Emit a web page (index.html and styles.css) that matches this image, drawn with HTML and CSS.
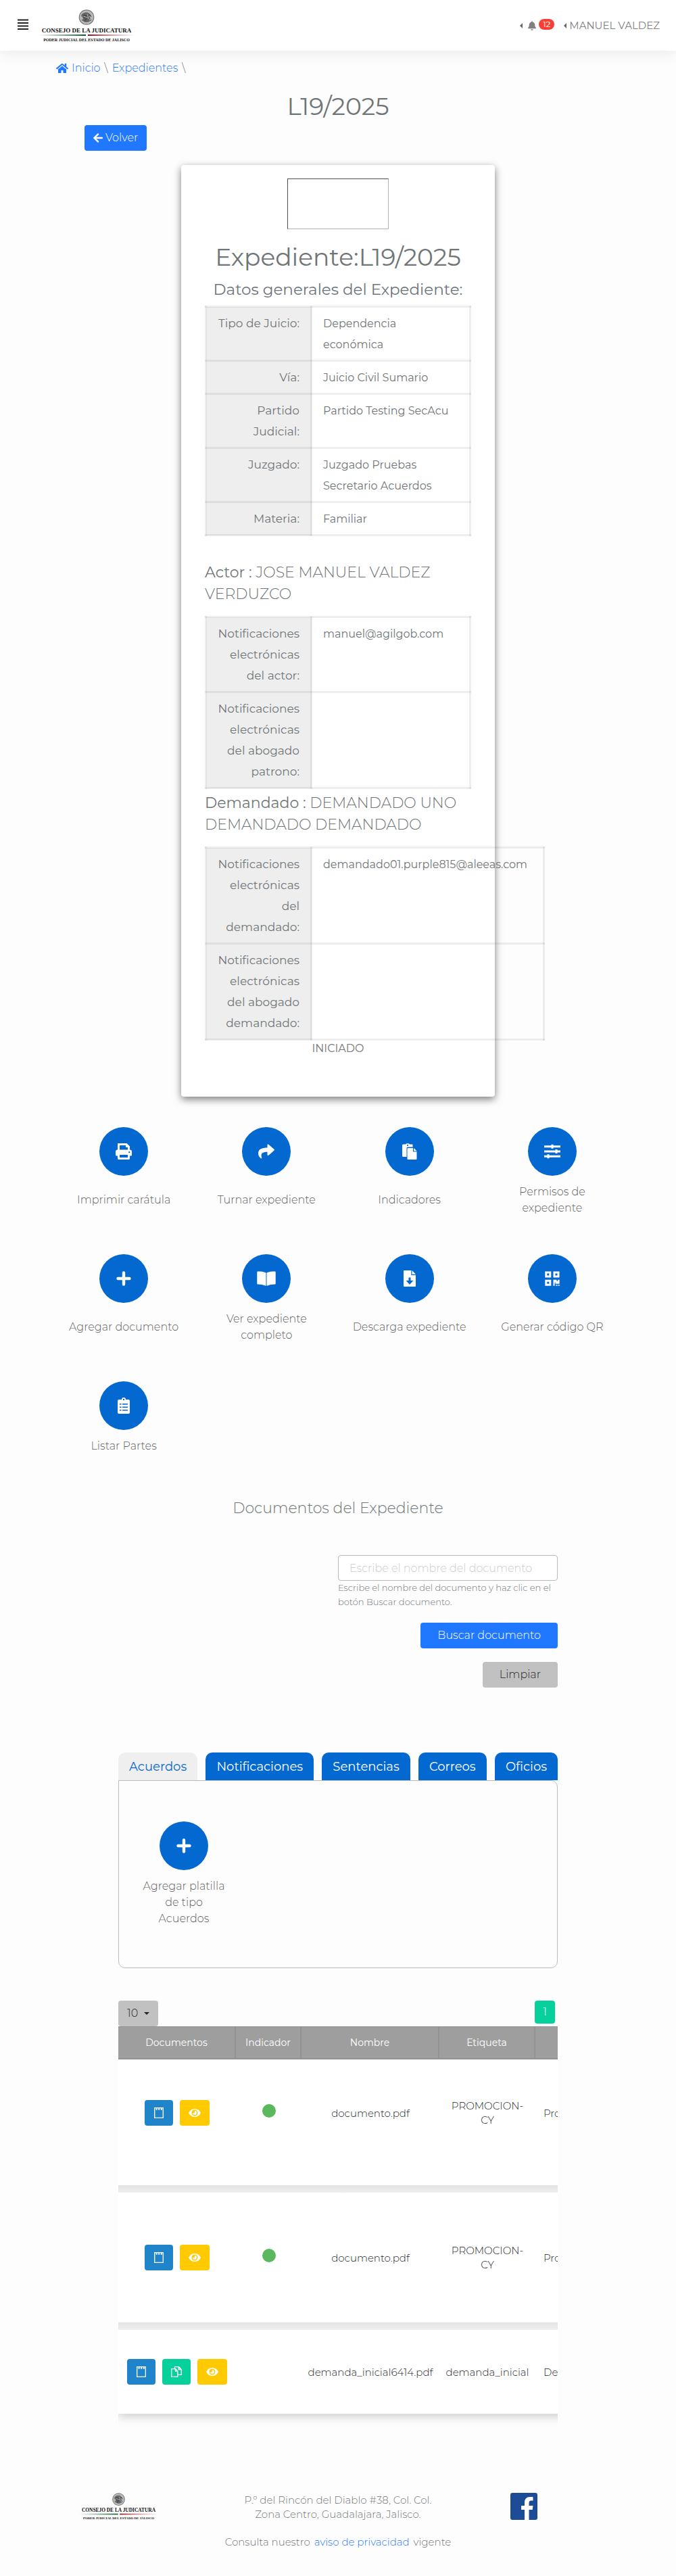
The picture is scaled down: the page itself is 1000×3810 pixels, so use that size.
FILE: index.html
```html
<!DOCTYPE html>
<html lang="es">
<head>
<meta charset="utf-8">
<meta name="viewport" content="width=device-width, initial-scale=1">
<title>L19/2025</title>
<link rel="stylesheet" href="styles.css">
</head>
<body>
<svg class="defs" aria-hidden="true">
  <defs>
    <linearGradient id="green" x1="0" x2="1"><stop offset="0" stop-color="#1d6b35" stop-opacity="0"/><stop offset="1" stop-color="#0f5a28"/></linearGradient>
    <linearGradient id="red" x1="0" x2="1"><stop offset="0" stop-color="#8f0d18"/><stop offset="1" stop-color="#c8555c" stop-opacity="0"/></linearGradient>
    <symbol id="logo" viewBox="0 0 142 48">
      <circle cx="71" cy="11.500" r="10.700" fill="#d6d6d6" stroke="#777" stroke-width="1.300"/>
      <circle cx="71" cy="11.500" r="8.800" fill="#bdbdbd" stroke="#999" stroke-width=".6"/>
      <path d="M64 7c3-3 8-4 11-1l3 3-3 1 2 3-3 4-5 1-4-3 2-3-4-2z" fill="#666"/>
      <path d="M66 8l7 2M65 12l8 1M68 16l6-4M75 7l3 4M64 15c4 4 10 4 14 0" stroke="#333" stroke-width="1" fill="none"/>
      <path d="M67 10l6 3M72 7l2 7" stroke="#ddd" stroke-width=".7" fill="none"/>
      <text x="71" y="33.500" class="logo-name">CONSEJO DE LA JUDICATURA</text>
      <rect x="0" y="37" width="70" height="2" fill="url(#green)"/>
      <rect x="73" y="37" width="69" height="2" fill="url(#red)"/>
      <text x="71" y="47" class="logo-sub">PODER JUDICIAL DEL ESTADO DE JALISCO</text>
    </symbol>
    <symbol id="plus" viewBox="0 0 24 24"><path d="M12 3.500v17M3.500 12h17" stroke="#fff" stroke-width="4.400" stroke-linecap="round"/></symbol>
    <symbol id="note" viewBox="0 0 16 18"><path d="M1.700 1.600h12.600v14.800H1.700z" fill="none" stroke="#fff" stroke-width="1.300"/><path d="M3 3.500h10.500" stroke="#fff" stroke-width="2.600" stroke-dasharray="2 1.600" stroke-dashoffset="-.6"/></symbol>
    <symbol id="eye" viewBox="0 0 20 14"><path fill="#fff" fill-rule="evenodd" d="M1 7C3 3 6 1 10 1s7 2 9 6c-2 4-5 6-9 6S3 11 1 7zm9-4.500a4.500 4.500 0 1 0 0 9 4.500 4.500 0 0 0 0-9z"/><path fill="#fff" d="M10 4a3 3 0 1 1-3 3c1.200 1 3 0 3-1.300C10 5 9.600 4.500 10 4z"/></symbol>
    <symbol id="copies" viewBox="0 0 18 18"><path d="M1.700 4.700h6l3 3v8.600h-9zM7.500 5v3h3M6.500 4.500V1.700h6l3.800 3.800v7.800h-5M12.300 2v3.500h3.700" fill="none" stroke="#fff" stroke-width="1.300"/></symbol>
  </defs>
</svg>

<header class="topbar">
  <button class="menu" type="button" aria-label="Menú">
    <svg viewBox="0 0 16 16" width="16" height="16"><path d="M0 1.500h16M0 6h16M0 10.500h16M0 15h16" stroke="#222" stroke-width="2"/></svg>
  </button>
  <svg class="logo" role="img" aria-label="Consejo de la Judicatura"><use href="#logo"/></svg>
  <button class="bell" type="button" aria-label="Notificaciones">
    <span class="caret-left"></span>
    <svg viewBox="0 0 448 512" width="12" height="14"><path fill="#808080" d="M224 512c35.320 0 63.970-28.650 63.970-64H160.030c0 35.350 28.650 64 63.970 64zm215.390-149.710c-19.320-20.760-55.470-51.990-55.470-154.290 0-77.700-54.480-139.900-127.940-155.160V32c0-17.670-14.320-32-31.980-32s-31.980 14.330-31.980 32v20.840C118.560 68.100 64.080 130.300 64.080 208c0 102.300-36.150 133.530-55.470 154.290-6 6.450-8.660 14.160-8.610 21.710.11 16.400 12.980 32 32.100 32h383.800c19.120 0 32-15.600 32.100-32 .05-7.550-2.610-15.270-8.610-21.710z"/></svg>
    <span class="badge">12</span>
  </button>
  <button class="user" type="button"><span class="caret-left"></span>MANUEL VALDEZ</button>
</header>

<main>
  <nav class="crumbs" aria-label="Ruta">
    <a href="#"><svg viewBox="0 0 576 512" width="18" height="16"><path fill="currentColor" d="M280.370 148.260L96 300.110V464a16 16 0 0 0 16 16l112.060-.29a16 16 0 0 0 15.920-16V368a16 16 0 0 1 16-16h64a16 16 0 0 1 16 16v95.640a16 16 0 0 0 16 16.050L464 480a16 16 0 0 0 16-16V300L295.670 148.260a12.190 12.190 0 0 0-15.300 0zM571.600 251.470L488 182.560V44.050a12 12 0 0 0-12-12h-56a12 12 0 0 0-12 12v72.610L318.470 43a48 48 0 0 0-61 0L4.340 251.470a12 12 0 0 0-1.600 16.900l25.500 31A12 12 0 0 0 45.150 301l235.220-193.740a12.190 12.190 0 0 1 15.300 0L530.900 301a12 12 0 0 0 16.900-1.600l25.500-31a12 12 0 0 0-1.700-16.930z"/></svg>Inicio</a>
    <span>\</span><a href="#">Expedientes</a><span>\</span>
  </nav>
  <h1 class="title">L19/2025</h1>
  <div class="back">
    <a class="btn primary compact" href="#"><svg viewBox="0 0 448 512" width="14" height="16"><path fill="#fff" d="M257.500 445.100l-22.200 22.200c-9.400 9.400-24.600 9.400-33.900 0L7 273c-9.400-9.400-9.400-24.600 0-33.900L201.400 44.700c9.400-9.400 24.600-9.400 33.900 0l22.200 22.200c9.500 9.500 9.300 25-.4 34.300L136.600 216H424c13.300 0 24 10.700 24 24v32c0 13.300-10.700 24-24 24H136.600l120.500 114.800c9.800 9.300 10 24.800.4 34.300z"/></svg>Volver</a>
  </div>

  <section class="card">
    <div class="qr"></div>
    <h2 class="card-title">Expediente:L19/2025</h2>
    <h3 class="card-sub">Datos generales del Expediente:</h3>
    <table class="facts">
      <tr><th scope="row">Tipo de Juicio:</th><td>Dependencia económica</td></tr>
      <tr><th scope="row">Vía:</th><td>Juicio Civil Sumario</td></tr>
      <tr><th scope="row">Partido Judicial:</th><td>Partido Testing SecAcu</td></tr>
      <tr><th scope="row">Juzgado:</th><td>Juzgado Pruebas Secretario Acuerdos</td></tr>
      <tr><th scope="row">Materia:</th><td>Familiar</td></tr>
    </table>
    <h3 class="party actor"><b>Actor :</b> JOSE MANUEL VALDEZ VERDUZCO</h3>
    <table class="facts">
      <tr><th scope="row">Notificaciones electrónicas del actor:</th><td>manuel@agilgob.com</td></tr>
      <tr><th scope="row">Notificaciones electrónicas del abogado patrono:</th><td></td></tr>
    </table>
    <h3 class="party"><b>Demandado :</b> DEMANDADO UNO DEMANDADO DEMANDADO</h3>
    <table class="facts wide">
      <tr><th scope="row">Notificaciones electrónicas del<br>demandado:</th><td>demandado01.purple815@aleeas.com</td></tr>
      <tr><th scope="row">Notificaciones electrónicas del abogado demandado:</th><td></td></tr>
    </table>
    <p class="status">INICIADO</p>
  </section>

  <section class="actions">
    <button type="button" class="action"><span class="disc"><svg viewBox="0 0 24 24"><path d="M4.500 12V1.500H16l3.500 3.500v7" fill="none" stroke="#fff" stroke-width="3"/><path d="M15 1v5h5" fill="#fff"/><path fill="#fff" fill-rule="evenodd" d="M3 9.500h18a3 3 0 0 1 3 3v5a1 1 0 0 1-1 1H1a1 1 0 0 1-1-1v-5a3 3 0 0 1 3-3zm17.200 2.600a1.200 1.200 0 1 0 0 2.400 1.200 1.200 0 0 0 0-2.400z"/><path d="M4.500 15.500h15v7h-15z" fill="#0468d1" stroke="#fff" stroke-width="3" stroke-linejoin="round"/></svg></span><span class="action-label">Imprimir carátula</span></button>
    <button type="button" class="action"><span class="disc"><svg viewBox="0 0 512 512"><path fill="#fff" d="M503.691 189.836L327.687 37.851C312.281 24.546 288 35.347 288 56.015v80.053C127.371 137.907 0 170.100 0 322.326c0 61.441 39.581 122.309 83.333 154.132 13.653 9.931 33.111-2.533 28.077-18.631C66.066 312.814 132.917 274.316 288 272.085V360c0 20.700 24.300 31.453 39.687 18.164l176.004-152c11.071-9.562 11.086-26.753 0-36.328z"/></svg></span><span class="action-label">Turnar expediente</span></button>
    <button type="button" class="action"><span class="disc"><svg viewBox="0 0 24 24"><path fill="#fff" fill-rule="evenodd" d="M2.500 1.500H6C6.500-.2 11.500-.2 12 1.500h3.500a1 1 0 0 1 1 1V5.500H9.500a2 2 0 0 0-2 2V20h-5a1.500 1.500 0 0 1-1.500-1.500V3a1.500 1.500 0 0 1 1.500-1.500zM9 1.800a1.100 1.100 0 1 0 0 2.200 1.100 1.100 0 0 0 0-2.200z"/><path fill="#fff" d="M9.500 7H17v5.500h5.500V23a1 1 0 0 1-1 1h-12a1 1 0 0 1-1-1V8a1 1 0 0 1 1-1z"/><path fill="#fff" d="M18.200 7l4.500 4.500h-4.500z"/></svg></span><span class="action-label">Indicadores</span></button>
    <button type="button" class="action"><span class="disc"><svg viewBox="0 0 24 24"><path d="M0 4.700h24M0 12h24M0 19.300h24" stroke="#fff" stroke-width="3"/><path d="M12 1.700v6M18 9v6M6 16.300v6" stroke="#fff" stroke-width="3"/></svg></span><span class="action-label">Permisos de expediente</span></button>
    <button type="button" class="action"><span class="disc"><svg><use href="#plus"/></svg></span><span class="action-label">Agregar documento</span></button>
    <button type="button" class="action"><span class="disc"><svg class="broad" viewBox="0 0 28 24"><path fill="#fff" d="M13.500 3.500C10 1.700 5.500 1.500 1.200 1.500A.9.9 0 0 0 .3 2.400V19.500c0 .6.400 1 1 1 4 .1 8 .5 11.500 2.200.4.200.7 0 .7-.4zM14.500 3.500c3.500-1.800 8-2 12.300-2 .5 0 .9.400.9.900V19.500c0 .6-.4 1-1 1-4 .1-8 .5-11.500 2.200-.4.200-.7 0-.7-.4z"/></svg></span><span class="action-label">Ver expediente completo</span></button>
    <button type="button" class="action"><span class="disc"><svg viewBox="0 0 24 24"><path fill="#fff" fill-rule="evenodd" d="M4 0h10.300v7H21v16a1 1 0 0 1-1 1H4a1 1 0 0 1-1-1V1a1 1 0 0 1 1-1zm6.500 10.500V15H6.700l5.300 6 5.300-6h-3.800v-4.500z"/><path fill="#fff" d="M15.500 0L21 5.700h-5.500z"/></svg></span><span class="action-label">Descarga expediente</span></button>
    <button type="button" class="action"><span class="disc"><svg viewBox="0 0 24 24"><path d="M2.800 3h6v6h-6zM15 3h6v6h-6zM2.800 15.200h6v6h-6z" fill="none" stroke="#fff" stroke-width="3"/><path fill="#fff" d="M13.500 13.700h5v2h1.700v-2h2.400v6h-6v-2h-1v5h-2.100zM17.500 21h2v1.700h-2zM20.700 21h2v1.700h-2z"/></svg></span><span class="action-label">Generar código QR</span></button>
    <button type="button" class="action"><span class="disc"><svg viewBox="0 0 24 24"><path fill="#fff" fill-rule="evenodd" d="M5 3h4a3 3 0 0 1 6 0h4a2 2 0 0 1 2 2v17a2 2 0 0 1-2 2H5a2 2 0 0 1-2-2V5a2 2 0 0 1 2-2zm7-1.200a1.200 1.200 0 1 0 0 2.400 1.200 1.200 0 0 0 0-2.400z"/><path d="M6 9.800h2.500M10 9.800h8M6 14.300h2.500M10 14.300h8M6 18.800h2.500M10 18.800h8" stroke="#0468d1" stroke-width="1.500"/></svg></span><span class="action-label">Listar Partes</span></button>
  </section>

  <section class="docs">
    <h2 class="docs-title">Documentos del Expediente</h2>
    <form class="search">
      <input id="doc-name" type="text" placeholder="Escribe el nombre del documento">
      <label for="doc-name">Escribe el nombre del documento y haz clic en el botón Buscar documento.</label>
      <button type="button" class="btn primary">Buscar documento</button>
      <button type="button" class="btn muted">Limpiar</button>
    </form>

    <div class="tabs">
      <button type="button" class="tab active">Acuerdos</button>
      <button type="button" class="tab">Notificaciones</button>
      <button type="button" class="tab">Sentencias</button>
      <button type="button" class="tab">Correos</button>
      <button type="button" class="tab">Oficios</button>
    </div>
    <div class="panel">
      <button type="button" class="action"><span class="disc"><svg><use href="#plus"/></svg></span><span class="action-label">Agregar platilla de tipo Acuerdos</span></button>
    </div>

    <div class="tools">
      <button type="button" class="btn muted size">10<span class="caret-down"></span></button>
      <button type="button" class="page">1</button>
    </div>
    <div class="scroller">
      <table class="list">
        <colgroup><col class="c1"><col class="c2"><col class="c3"><col class="c4"><col class="c5"></colgroup>
        <thead><tr><th>Documentos</th><th>Indicador</th><th>Nombre</th><th>Etiqueta</th><th></th></tr></thead>
        <tbody>
          <tr class="first">
            <td><div class="tools-cell"><button type="button" class="ico blue" aria-label="Nota"><svg width="16" height="18"><use href="#note"/></svg></button><button type="button" class="ico yellow" aria-label="Ver"><svg width="20" height="14"><use href="#eye"/></svg></button></div></td>
            <td><span class="dot"></span></td><td>documento.pdf</td><td>PROMOCION-CY</td><td>Promoción</td>
          </tr>
          <tr class="tall">
            <td><div class="tools-cell"><button type="button" class="ico blue" aria-label="Nota"><svg width="16" height="18"><use href="#note"/></svg></button><button type="button" class="ico yellow" aria-label="Ver"><svg width="20" height="14"><use href="#eye"/></svg></button></div></td>
            <td><span class="dot"></span></td><td>documento.pdf</td><td>PROMOCION-CY</td><td>Promoción</td>
          </tr>
          <tr class="short">
            <td><div class="tools-cell"><button type="button" class="ico blue" aria-label="Nota"><svg width="16" height="18"><use href="#note"/></svg></button><button type="button" class="ico teal" aria-label="Copias"><svg width="18" height="18"><use href="#copies"/></svg></button><button type="button" class="ico yellow" aria-label="Ver"><svg width="20" height="14"><use href="#eye"/></svg></button></div></td>
            <td></td><td>demanda_inicial6414.pdf</td><td>demanda_inicial</td><td>Demanda</td>
          </tr>
        </tbody>
      </table>
    </div>
  </section>
</main>

<footer class="footer">
  <svg class="foot-logo" role="img" aria-label="Consejo de la Judicatura"><use href="#logo"/></svg>
  <div class="foot-text">
    <p>P.º del Rincón del Diablo #38, Col. Col.<br>Zona Centro, Guadalajara, Jalisco.</p>
    <p>Consulta nuestro <a href="#">aviso de privacidad</a> vigente</p>
  </div>
  <a class="facebook" href="#" aria-label="Facebook"><svg viewBox="0 0 40 40" width="40" height="40"><rect width="40" height="40" rx="3" fill="#1c4c96"/><path fill="#fff" d="M21 40V25h-5v-6h5v-4.500C21 9 24 6 29 6c2 0 3.500.1 4.500.3v5.200H31c-2.800 0-3.500 1.300-3.500 3.500v4h6l-.8 6h-5.200v15z"/></svg></a>
</footer>
</body>
</html>
```
FILE: styles.css
```css
* { box-sizing: border-box; }
body {
  margin: 0;
  background: #fdfdfd;
  color: #707678;
  font: 300 16px/24px Montserrat, Inter, sans-serif;
}
h1, h2, h3, p { margin: 0; font-weight: 300; }
button, input { font: inherit; color: inherit; }
button { border: 0; padding: 0; background: none; cursor: pointer; }
a { color: #1f78ff; text-decoration: none; }
svg { display: block; flex: none; }
.defs { position: absolute; width: 0; height: 0; }

.topbar {
  display: flex;
  align-items: center;
  height: 75px;
  padding: 0 24px 0 26px;
  background: #fff;
  box-shadow: 0 4px 20px rgba(0, 0, 0, .08);
  color: #808080;
}
.menu { margin: 0 15px 4px 0; }
.logo { width: 142px; height: 48px; margin-right: auto; }
.logo-name { font: 700 9px "Liberation Serif", serif; text-anchor: middle; fill: #111; }
.logo-sub { font: 700 6px "Liberation Serif", serif; text-anchor: middle; fill: #111; }
.bell, .user { display: flex; align-items: center; }
.bell { gap: 8px; margin-right: 14px; }
.user { gap: 4px; font-size: 15px; font-weight: 400; }
.caret-left { border: 4px solid transparent; border-right-color: #666; border-left: 0; }
.badge {
  margin: 0 0 4px -4px;
  padding: 0 6px;
  border-radius: 8px;
  background: #f93f35;
  color: #fff;
  font-size: 12px;
  font-weight: 400;
  line-height: 16px;
}

.crumbs { display: flex; gap: 6px; padding: 14px 83px 0; }
.crumbs a { display: flex; align-items: center; gap: 5px; }
.title { margin-top: 22px; font-size: 36px; line-height: 44px; font-weight: 400; text-align: center; }
.back { display: flex; margin: 6px 125px 21px; }
.btn {
  display: flex;
  align-items: center;
  height: 38px;
  padding: 0 25px;
  border-radius: 4px;
}
.compact { gap: 4px; padding: 0 13px; }
.primary { background: #1f78ff; color: #fff; }
.muted { background: #c1c1c1; color: #212529; }

.card {
  width: 46.4%;
  min-width: 464px;
  margin: 0 auto;
  padding: 20px 35px 59px;
  border-radius: 4px;
  background: #fff;
  box-shadow: 0 4px 12px rgba(0, 0, 0, .5);
}
.qr { width: 150px; height: 75px; margin: 0 auto; border: 1px solid; border-color: #4c4c4c #b2b2b2 #b2b2b2 #4c4c4c; }
.card-title { margin-top: 17px; font-size: 36px; line-height: 48px; font-weight: 400; text-align: center; white-space: nowrap; }
.card-sub { margin: 8px 0; color: #6c757d; font-size: 23px; line-height: 32px; font-weight: 400; text-align: center; white-space: nowrap; }
.facts { width: 100%; table-layout: fixed; border-collapse: collapse; font-size: 16px; line-height: 31px; }
.facts th, .facts td { padding: 8px 16px 7px; border: 3px solid rgba(0, 0, 0, .065); font-weight: 400; text-align: left; vertical-align: top; }
.facts td { padding-right: 24px; }
.facts th { width: 156px; background: rgba(0, 0, 0, .065); font-size: 17px; text-align: right; }
.wide { width: 503px; }
.wide td { padding-right: 16px; }
.party { margin: 5px 0 16px; font-size: 22px; line-height: 32px; }
.party b { font-weight: 400; }
.actor { margin-top: 38px; }
.status { font-weight: 400; text-align: center; }

.actions {
  display: grid;
  grid-template-columns: repeat(4, 1fr);
  gap: 56px 0;
  max-width: 845px;
  margin: 45px auto 0;
}
.action { display: flex; flex-direction: column; align-items: center; gap: 12px; padding: 0 12px; color: #5f5f5f; }
.action-label { display: flex; flex: 1; align-items: center; max-width: 176px; }
.disc { display: flex; align-items: center; justify-content: center; width: 72px; height: 72px; border-radius: 50%; background: #0468d1; }
.disc svg { width: 24px; height: 24px; }
.disc .broad { width: 28px; }

.docs { max-width: 650px; margin: 64px auto 0; }
.docs-title { margin-bottom: 53px; font-size: 22px; line-height: 32px; text-align: center; }
.search { display: flex; flex-direction: column; align-items: flex-end; gap: 20px; }
.search input { width: 50%; height: 38px; padding: 0 16px; border: 1px solid #bbb; border-radius: 4px; background: #fff; }
.search input::placeholder { color: #ccc; opacity: 1; }
.search label { width: 50%; margin-top: -20px; font-size: 13px; line-height: 21px; }

.tabs { display: flex; justify-content: space-between; margin-top: 96px; }
.tab { height: 41px; padding: 0 16px; border-radius: 10px 10px 0 0; background: #0468d1; color: #fff; font-size: 18px; font-weight: 400; }
.tab.active { background: #efefef; color: #0468d1; }
.panel { padding: 60px 28px; border: 1px solid #bbb; border-radius: 0 10px 10px 10px; }
.panel .action { width: 136px; padding: 0; }
.panel .action-label { max-width: 128px; }

.tools { display: flex; justify-content: space-between; align-items: flex-start; margin-top: 48px; padding-right: 4px; }
.size { gap: 9px; padding: 0 13px; }
.caret-down { border: 4px solid transparent; border-top-color: #212529; border-bottom: 0; }
.page { width: 30px; height: 34px; border-radius: 4px; background: #06d09c; color: #fff; }
.scroller { overflow: hidden; padding-bottom: 24px; }
.list { width: 748px; table-layout: fixed; border-collapse: separate; border-spacing: 0; box-shadow: 0 4px 14px rgba(0, 0, 0, .2); color: #212529; font-size: 15px; line-height: 21px; text-align: center; }
.c1 { width: 174px; }
.c2 { width: 97px; }
.c3 { width: 204px; }
.c4 { width: 142px; }
.c5 { width: 131px; }
.list th { height: 49px; padding: 0; border: solid #929292; border-width: 1px 2px 2px 0; background: #9e9e9e; color: #fff; font-size: 14px; font-weight: 400; }
.list td { padding: 0 8px; background: #fff; }
.list td:nth-child(4) { padding: 0 16px; }
.list td:last-child { padding: 0 12px; text-align: left; }
.first td { height: 186px; }
.list .first td { padding-bottom: 28px; }
.tall td { height: 203px; }
.short td { height: 135px; }
.list .tall td, .list .short td { padding-top: 11px; background: linear-gradient(#e3e3e3, #efefef) top / 100% 11px no-repeat #fff; }
.list .short td:nth-child(4) { padding: 11px 8px 0; }
.tools-cell { display: flex; justify-content: center; gap: 10px; }
.ico { display: flex; align-items: center; justify-content: center; width: 42px; height: 38px; border-radius: 4px; }
.blue { background: #1f84c9; }
.yellow { width: 44px; background: #ffca00; }
.teal { background: #06d09c; }
.dot { display: block; width: 20px; height: 20px; margin: -6px auto 0; border-radius: 50%; background: #5cb85c; }

.footer { display: grid; grid-template-columns: 5fr 8fr 5fr; align-items: start; max-width: 900px; margin: 0 auto; padding: 93px 0 40px; font-size: 15px; line-height: 21px; }
.foot-logo { width: 117px; height: 40px; margin: 0 auto; }
.foot-text { display: flex; flex-direction: column; gap: 20px; text-align: center; }
.foot-text a { margin: 0 2px; }
.facebook { margin-left: 55px; }
```
